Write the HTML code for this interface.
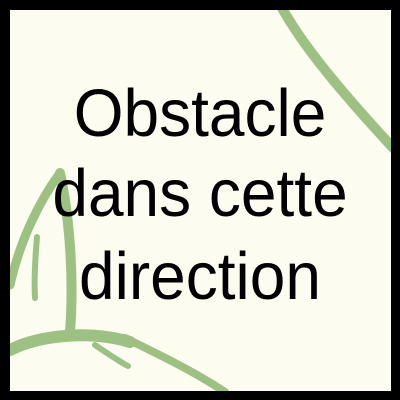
<!DOCTYPE html>
<html><head><style>
html,body{margin:0;padding:0;background:#000;}
.wrap{position:relative;width:400px;height:400px;background:#000;}
.in{position:absolute;left:10px;top:10px;width:381px;height:381px;background:#fdfcf1;overflow:hidden;}
svg{position:absolute;left:0;top:0;}
.t{position:absolute;left:0;width:400px;text-align:center;font-family:"Liberation Sans",sans-serif;font-size:64px;color:#000;line-height:1;transform:scaleY(1.05);}
</style></head><body>
<div class="wrap">
<div class="in"></div>
<svg width="400" height="400" viewBox="0 0 400 400">
<defs><clipPath id="c"><rect x="10" y="10" width="381" height="381"/></clipPath></defs>
<g clip-path="url(#c)" fill="none" stroke="#9dc183" stroke-linecap="round">
<path d="M282,8 C300,40 330,80 395,150" stroke-width="10"/>
<path d="M60,173 C40,200 20,240 10,285" stroke-width="9"/>
<path d="M60,173 C70,220 74,280 70,332" stroke-width="10"/>
<path d="M37,237 C35,260 34,280 35,298" stroke-width="6"/>
<path d="M10,350 C40,335 90,330 130,342" stroke-width="12"/>
<path d="M125,338 C160,355 195,372 225,392" stroke-width="8"/>
<path d="M95,345 C110,355 120,362 128,366" stroke-width="6"/>
</g>
</svg>
<div class="t" style="top:81px">Obstacle</div>
<div class="t" style="top:161px">dans cette</div>
<div class="t" style="top:244px">direction</div>
</div>
</body></html>
